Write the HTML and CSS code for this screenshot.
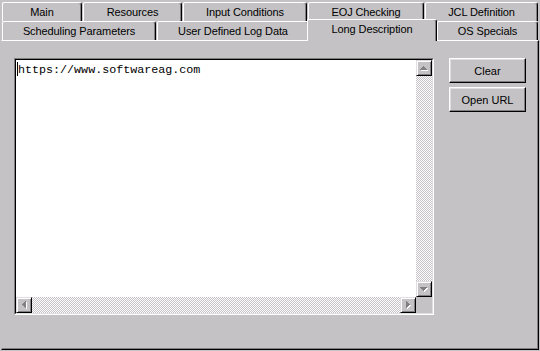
FILE: index.html
```html
<!DOCTYPE html>
<html lang="en">
<head>
  <meta charset="UTF-8" />
  <title>Long Description</title>
  <link rel="stylesheet" href="styles.css">
</head>
<body>
  <div class="dialog">
    <div class="tabrow">
      <div class="tab w-main">Main</div>
      <div class="tab w-res">Resources</div>
      <div class="tab w-input">Input Conditions</div>
      <div class="tab w-eoj">EOJ Checking</div>
      <div class="tab w-jcl">JCL Definition</div>
    </div>
    <div class="tabrow">
      <div class="tab w-sched">Scheduling Parameters</div>
      <div class="tab w-user">User Defined Log Data</div>
      <div class="tab tab-active w-long">Long Description</div>
      <div class="tab w-os">OS Specials</div>
    </div>

    <div class="panel">
      <div class="memo">
        <div class="memo-inner">
          <div class="memo-text"><span class="caret"></span>https://www.softwareag.com</div>

          <div class="vscroll">
            <div class="sbtn">
              <svg width="8" height="5" viewBox="0 0 8 5" shape-rendering="crispEdges">
                <g fill="#fff" transform="translate(1,1)"><rect x="3" y="0" width="1" height="1"/><rect x="2" y="1" width="3" height="1"/><rect x="1" y="2" width="5" height="1"/><rect x="0" y="3" width="7" height="1"/></g>
                <g fill="#808080"><rect x="3" y="0" width="1" height="1"/><rect x="2" y="1" width="3" height="1"/><rect x="1" y="2" width="5" height="1"/><rect x="0" y="3" width="7" height="1"/></g>
              </svg>
            </div>
            <div class="track"></div>
            <div class="sbtn">
              <svg width="8" height="5" viewBox="0 0 8 5" shape-rendering="crispEdges">
                <g fill="#fff" transform="translate(1,1)"><rect x="0" y="0" width="7" height="1"/><rect x="1" y="1" width="5" height="1"/><rect x="2" y="2" width="3" height="1"/><rect x="3" y="3" width="1" height="1"/></g>
                <g fill="#808080"><rect x="0" y="0" width="7" height="1"/><rect x="1" y="1" width="5" height="1"/><rect x="2" y="2" width="3" height="1"/><rect x="3" y="3" width="1" height="1"/></g>
              </svg>
            </div>
          </div>

          <div class="hscroll">
            <div class="sbtn">
              <svg width="5" height="8" viewBox="0 0 5 8" shape-rendering="crispEdges">
                <g fill="#fff" transform="translate(1,1)"><rect x="3" y="0" width="1" height="7"/><rect x="2" y="1" width="1" height="5"/><rect x="1" y="2" width="1" height="3"/><rect x="0" y="3" width="1" height="1"/></g>
                <g fill="#808080"><rect x="3" y="0" width="1" height="7"/><rect x="2" y="1" width="1" height="5"/><rect x="1" y="2" width="1" height="3"/><rect x="0" y="3" width="1" height="1"/></g>
              </svg>
            </div>
            <div class="track"></div>
            <div class="sbtn">
              <svg width="5" height="8" viewBox="0 0 5 8" shape-rendering="crispEdges">
                <g fill="#fff" transform="translate(1,1)"><rect x="0" y="0" width="1" height="7"/><rect x="1" y="1" width="1" height="5"/><rect x="2" y="2" width="1" height="3"/><rect x="3" y="3" width="1" height="1"/></g>
                <g fill="#808080"><rect x="0" y="0" width="1" height="7"/><rect x="1" y="1" width="1" height="5"/><rect x="2" y="2" width="1" height="3"/><rect x="3" y="3" width="1" height="1"/></g>
              </svg>
            </div>
          </div>

          <div class="corner"></div>
        </div>
      </div>

      <div class="actions">
        <button class="btn">Clear</button>
        <button class="btn">Open URL</button>
      </div>
    </div>
  </div>
</body>
</html>
```

FILE: styles.css
```css
* {
  box-sizing: border-box;
}
body {
  margin: 0;
  background: #c4c2c4;
  font-family: "Liberation Sans", Arial, sans-serif;
  font-size: 11px;
  color: #000;
}
.dialog {
  width: 540px;
  height: 351px;
  padding-top: 2px;
}

/* tabs */
.tabrow {
  display: flex;
  height: 19px;
  padding-left: 2px;
}
.tabrow:first-child .tab {
  margin-right: 1px;
}
.tab {
  height: 19px;
  line-height: 18px;
  text-align: center;
  white-space: nowrap;
  overflow: hidden;
  letter-spacing: -0.1px;
  background: #c4c2c4;
  border-top: 1px solid #fff;
  border-left: 1px solid #fff;
  border-right: 1px solid #000;
  border-radius: 2px 3px 0 0;
  box-shadow: inset -1px 0 #808080;
}
.w-main { width: 80px; }
.w-res { width: 99px; }
.w-input { width: 124px; }
.w-eoj { width: 116px; }
.w-jcl { width: 113px; }
.w-sched { width: 154px; margin-right: 1px; }
.w-user { width: 152px; margin-right: -2px; }
.w-long { width: 130px; }
.w-os { width: 101px; }
.tab-active {
  position: relative;
  z-index: 2;
  height: 22px;
  margin-top: -2px;
}

/* page */
.panel {
  display: flex;
  align-items: flex-start;
  margin-left: 1px;
  width: 538px;
  height: 310px;
  padding: 17px 0 0 12px;
  border-top: 1px solid #fff;
  border-left: 1px solid #c4c2c4;
  border-right: 1px solid #000;
  border-bottom: 1px solid #000;
  box-shadow: inset -1px -1px #808080;
}

.memo {
  width: 420px;
  height: 257px;
  border: 1px solid;
  border-color: #808080 #fff #fff #808080;
}
.memo-inner {
  display: grid;
  grid-template-columns: 1fr 16px;
  grid-template-rows: 1fr 16px;
  height: 100%;
  border: 1px solid;
  border-color: #000 #dfdfdf #dfdfdf #000;
  background: #fff;
}
.memo-text {
  padding: 2px 0 0 1px;
  font-family: "Liberation Mono", "Courier New", monospace;
  font-size: 11.7px;
  line-height: 13px;
  white-space: pre;
}
.caret {
  display: inline-block;
  width: 1px;
  height: 14px;
  vertical-align: -3px;
  background: #000;
}

.vscroll {
  display: flex;
  flex-direction: column;
}
.hscroll {
  display: flex;
}
.track {
  flex: 1;
  background: repeating-conic-gradient(#fff 0 25%, #c4c2c4 0 50%) 0 0 / 2px 2px;
}
.sbtn {
  display: flex;
  align-items: center;
  justify-content: center;
  width: 16px;
  height: 16px;
  flex: none;
  background: #c4c2c4;
  border: 1px solid;
  border-color: #dfdfdf #000 #000 #dfdfdf;
  box-shadow: inset 1px 1px #fff, inset -1px -1px #808080;
}
.corner {
  background: #c4c2c4;
}

.actions {
  display: flex;
  flex-direction: column;
  gap: 4px;
  margin-left: 15px;
}
.btn {
  width: 77px;
  height: 25px;
  padding: 0;
  font-family: "Liberation Sans", Arial, sans-serif;
  font-size: 11px;
  color: #000;
  background: #c4c2c4;
  border: 1px solid;
  border-color: #fff #000 #000 #fff;
  border-radius: 0;
  box-shadow: inset -1px -1px #808080, inset 1px 1px #dfdfdf;
}
```
